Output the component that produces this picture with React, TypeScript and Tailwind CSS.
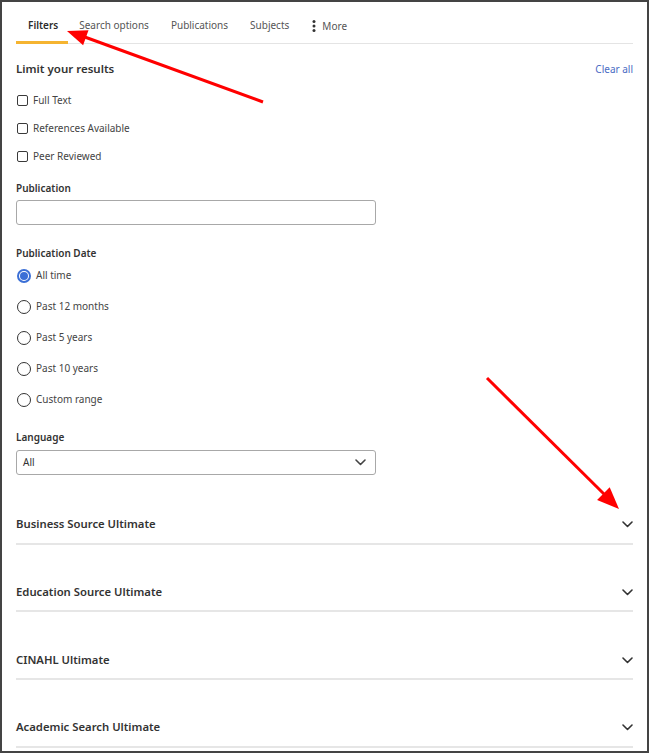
import { useState } from 'react'

// ── Icons ─────────────────────────────────────────────────────────────────────

function IconChevron({ className }: { className?: string }) {
  return (
    <svg width="11" height="7" viewBox="0 0 11 7" fill="none" aria-hidden="true" className={className}>
      <path d="M1 1l4.5 4.5L10 1" stroke="currentColor" strokeWidth="1.6" strokeLinecap="round" strokeLinejoin="round" />
    </svg>
  )
}

function IconDots() {
  return (
    <svg width="4" height="12" viewBox="0 0 4 12" aria-hidden="true">
      <circle cx="2" cy="1.6" r="1.5" fill="currentColor" />
      <circle cx="2" cy="6" r="1.5" fill="currentColor" />
      <circle cx="2" cy="10.4" r="1.5" fill="currentColor" />
    </svg>
  )
}

// ── Annotation arrows (drawn over the panel) ──────────────────────────────────

function Arrows() {
  return (
    <svg
      width="650"
      height="754"
      viewBox="0 0 650 754"
      className="absolute left-[-2px] top-[-2px] pointer-events-none"
      aria-hidden="true"
    >
      <line x1="263" y1="102" x2="82" y2="36" stroke="#ff0000" strokeWidth="3" />
      <polygon points="67,31 88.5,30.3 83.1,45.3" fill="#ff0000" />
      <line x1="487" y1="378" x2="606" y2="496" stroke="#ff0000" strokeWidth="3" />
      <polygon points="619,509 609.7,487.2 597.1,500" fill="#ff0000" />
    </svg>
  )
}

// ── Pieces ────────────────────────────────────────────────────────────────────

const TABS = ['Filters', 'Search options', 'Publications', 'Subjects']
const CHECKS = ['Full Text', 'References Available', 'Peer Reviewed']
const DATES = ['All time', 'Past 12 months', 'Past 5 years', 'Past 10 years', 'Custom range']
const SOURCES = ['Business Source Ultimate', 'Education Source Ultimate', 'CINAHL Ultimate', 'Academic Search Ultimate']

function Checkbox({ label }: { label: string }) {
  return (
    <label className="h-[28px] pt-[1px] flex items-center gap-[5px] cursor-pointer">
      <span className="ml-[1px] size-[11px] border-[1.5px] border-[#3a3a3a] rounded-[2px] bg-white" />
      <span className="text-[10px] text-[#444]">{label}</span>
    </label>
  )
}

function Radio({ label, checked, onSelect }: { label: string; checked: boolean; onSelect: () => void }) {
  return (
    <button type="button" onClick={onSelect} className="h-[31px] flex items-center gap-[5px] text-left">
      <span
        className={
          checked
            ? 'ml-[1px] size-[14px] rounded-full border-2 border-[#3b6fd6] grid place-items-center'
            : 'ml-[1px] size-[14px] rounded-full border-[1.5px] border-[#333]'
        }
      >
        {checked && <span className="size-[8px] rounded-full bg-[#3b6fd6]" />}
      </span>
      <span className="text-[10px] text-[#444]">{label}</span>
    </button>
  )
}

// ── App ───────────────────────────────────────────────────────────────────────

export default function App() {
  const [tab, setTab] = useState('Filters')
  const [date, setDate] = useState('All time')

  return (
    <div className="w-[650px] h-[754px] bg-white" style={{ fontFamily: '"Noto Sans", "Open Sans", sans-serif' }}>
      <div className="relative w-[649px] h-[753px] border-2 border-[#444] px-[14px] overflow-hidden">
        {/* Tabs */}
        <div className="flex items-end border-b border-[#e4e4e4]">
          {TABS.map(t => (
            <button
              key={t}
              type="button"
              onClick={() => setTab(t)}
              className={
                t === tab
                  ? 'h-[42px] pt-[7px] pl-[12px] pr-[10px] -mb-px border-b-[3px] border-[#f5b431] text-[10px] font-semibold text-[#2b2b2b]'
                  : 'h-[42px] pt-[7px] px-[11px] -mb-px border-b-[3px] border-transparent text-[10px] text-[#555]'
              }
            >
              {t}
            </button>
          ))}
          <button type="button" className="h-[42px] pt-[9px] pl-[12px] -mb-px border-b-[3px] border-transparent flex items-center gap-[6px] text-[10px] text-[#555]">
            <span className="text-[#333]"><IconDots /></span>
            More
          </button>
        </div>

        {/* Limit your results */}
        <div className="mt-[15px] h-[20px] flex items-center justify-between">
          <span className="text-[11.5px] font-semibold text-[#333]">Limit your results</span>
          <button type="button" className="text-[10px] text-[#4a6cc4]">Clear all</button>
        </div>

        <div className="mt-[7px] flex flex-col">
          {CHECKS.map(c => <Checkbox key={c} label={c} />)}
        </div>

        {/* Publication */}
        <div className="mt-[10px] h-[16px] flex items-center text-[10px] font-semibold text-[#333]">Publication</div>
        <input className="mt-[4px] block w-[360px] h-[25px] border border-[#a8a8a8] rounded-[3px] outline-none px-2 text-[10px]" />

        {/* Publication Date */}
        <div className="mt-[21px] h-[14px] flex items-center text-[10px] font-semibold text-[#333]">Publication Date</div>
        <div className="flex flex-col">
          {DATES.map(d => <Radio key={d} label={d} checked={d === date} onSelect={() => setDate(d)} />)}
        </div>

        {/* Language */}
        <div className="mt-[15px] h-[14px] flex items-center text-[10px] font-semibold text-[#333]">Language</div>
        <div className="mt-[6px] w-[360px] h-[25px] border border-[#a8a8a8] rounded-[3px] flex items-center justify-between pl-[6px] pr-[9px]">
          <span className="text-[10px] text-[#333]">All</span>
          <IconChevron className="text-[#444]" />
        </div>

        {/* Sources */}
        <div className="mt-[2px] flex flex-col">
          {SOURCES.map(s => (
            <div key={s} className="mt-[25.7px] h-[42px] border-b-2 border-[#e6e6e6]">
              <button type="button" className="w-full h-[40px] pt-[4px] flex items-center justify-between">
                <span className="text-[11.3px] font-semibold text-[#333]">{s}</span>
                <IconChevron className="text-[#333]" />
              </button>
            </div>
          ))}
        </div>

        <Arrows />
      </div>
    </div>
  )
}
